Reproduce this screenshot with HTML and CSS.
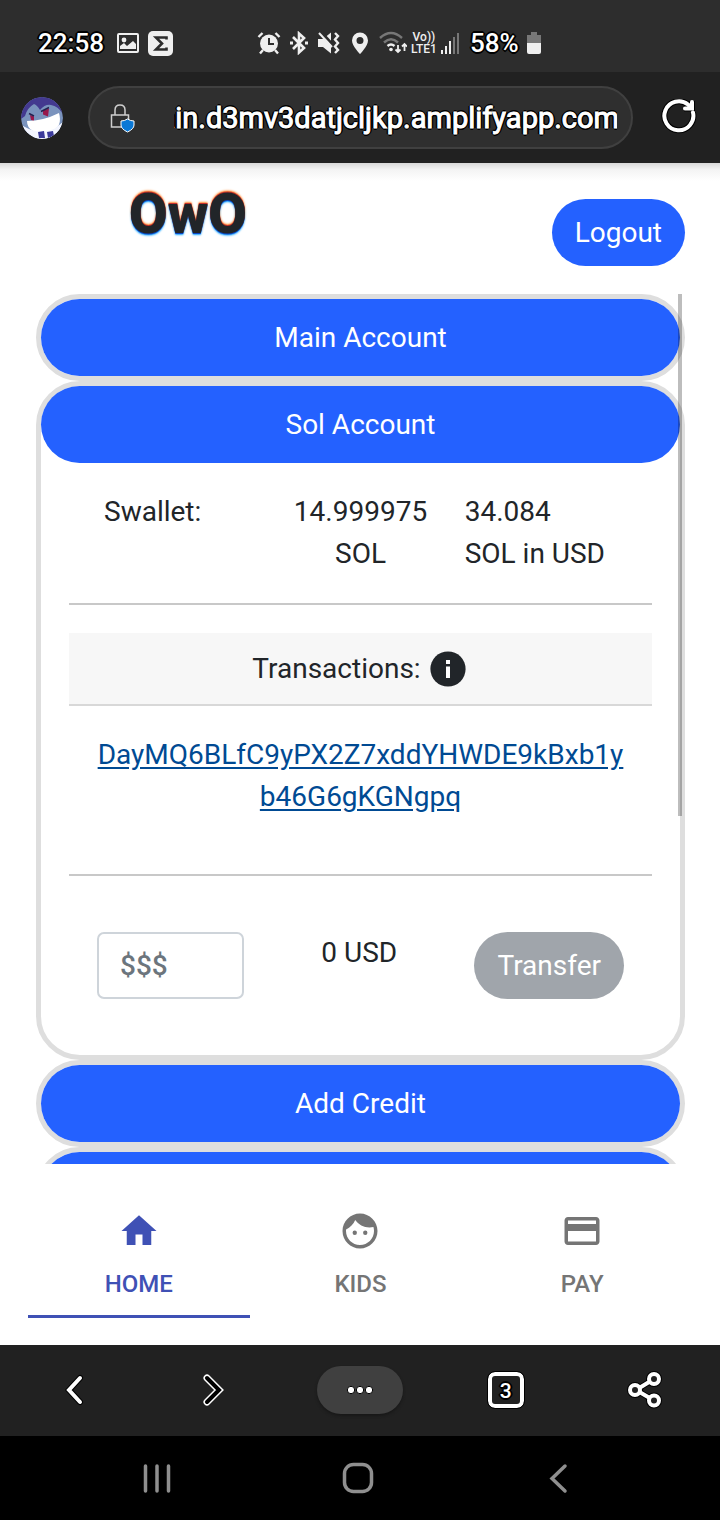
FILE: index.html
```html
<!DOCTYPE html>
<html lang="en">
<head>
<meta charset="utf-8">
<meta name="viewport" content="width=device-width, initial-scale=1">
<title>OwO Wallet</title>
<link rel="stylesheet" href="styles.css">
</head>
<body>
<div class="phone">
  <div class="status">
    <div class="status-left">
      <span class="outlined">22:58</span>
      <svg width="22" height="20" viewBox="0 0 22 20"><rect x="1" y="1" width="20" height="18" rx="1" fill="none" stroke="#efefef" stroke-width="2"/><circle cx="7" cy="7" r="2.4" fill="#efefef"/><path d="M3 16v-3l4-3 3 3 6-5 3 3v5z" fill="#efefef"/></svg>
      <svg width="25" height="25" viewBox="0 0 25 25"><rect width="25" height="25" rx="5" fill="#efefef"/><path d="M18.500 8.500V6.500H8l6 6-6 6h10.500v-2" fill="none" stroke="#2d2d2d" stroke-width="2.600"/></svg>
    </div>
    <div class="status-right">
      <svg width="24" height="24" viewBox="0 0 24 24" fill="none" stroke="#efefef"><circle cx="12" cy="12.500" r="9" fill="#efefef" stroke="none"/><path d="M12 7v6h5" stroke="#2d2d2d" stroke-width="2"/><path d="M1.500 6l4-4M22.500 6l-4-4M6 19l-3 3.500M18 19l3 3.500" stroke-width="2.400"/></svg>
      <svg width="20" height="24" viewBox="0 0 20 24" fill="none" stroke="#efefef" stroke-width="2.600"><path d="M4 6l11 11-5 4.500V2.500L15 7 4 18"/><path d="M1 12h3M16 12h3" stroke-width="3"/></svg>
      <svg width="24" height="24" viewBox="0 0 24 24" fill="#efefef"><path d="M1 8h5l8-6.500v21L6 16H1z"/><path d="M3 0l13 14" stroke="#2d2d2d" stroke-width="3"/><path d="M2 2l13 14" stroke="#efefef" stroke-width="2"/><path d="M18 2l3 3-3 3.500 3 3.500-3 3.500 3 3.500-3 3" fill="none" stroke="#efefef" stroke-width="2.400"/></svg>
      <svg class="pin" width="18" height="24" viewBox="0 0 18 24"><path fill-rule="evenodd" d="M9 1.500a8 8 0 0 0-8 8C1 15 9 23 9 23s8-8 8-13.500a8 8 0 0 0-8-8zM9 6a3.500 3.500 0 1 1 0 7 3.500 3.500 0 0 1 0-7z" fill="#efefef"/></svg>
      <svg width="28" height="24" viewBox="0 0 28 24" fill="none" stroke-width="2.400"><path d="M1 7q11-10 22 0M5 11.500q7-6.500 14 0" stroke="#777"/><path d="M8.500 15q3.500-3 7 0" stroke="#efefef"/><circle cx="12" cy="18.500" r="1.800" fill="#efefef"/><path d="M19 14v7M16.500 18.500L19 21l2.500-2.500M25.500 20v-7M23 15.500l2.500-2.500 2.500 2.500" stroke="#efefef" stroke-width="1.800"/></svg>
      <span class="volte"><span>Vo))</span><span>LTE1</span></span>
      <svg width="18" height="22" viewBox="0 0 18 22"><path d="M0 18h2v4H0zM4 14h2v8H4zM8 9h2v13H8z" fill="#efefef"/><path d="M12 5h2v17h-2zM16 1h2v21h-2z" fill="#777"/></svg>
      <span class="outlined battery-text">58%</span>
      <svg width="14" height="22" viewBox="0 0 14 22"><path d="M4 0h6v3h4v8H0V3h4z" fill="#777"/><path d="M0 11h14v9q0 2-2 2H2q-2 0-2-2z" fill="#efefef"/></svg>
    </div>
  </div>

  <div class="address-bar">
    <svg class="avatar" width="42" height="42" viewBox="0 0 42 42"><defs><clipPath id="face"><circle cx="21" cy="21" r="21"/></clipPath></defs><g clip-path="url(#face)"><path fill="#7a93bd" d="M0 0h42v42H0z"/><path d="M0 0h42v17q-5-8-12-9-6-1-11 5-3-5-6-6-7 4-9 12L0 22z" fill="#43398f"/><path d="M9 18l4 1.500v4.500l-3-1zM22 13.500l6-2-1 8-5-2z" fill="#97184b"/><path d="M8 16.500l5 2.500M20 14.500l8-4" stroke="#242250" stroke-width="1.500"/><path d="M6 24q16 0 32-8 4 14-8 18-10 3-18 0-6-3-6-10z" fill="#fff"/><path d="M0 28l8 4q12 5 25 0l9-7v4l-8 13H6z" fill="#f4f6ff"/><path d="M17 35l6-1 1 7h-6zM26 35l6-1 1 5-6 2z" fill="#3b3a9b"/></g></svg>
    <button class="address" type="button" aria-label="Address">
      <svg class="lock" width="28" height="32" viewBox="0 0 28 32"><path d="M6 13V8q0-5 5-5t5 5v5M2.500 13h17v12h-17z" fill="none" stroke="#cfcfcf" stroke-width="1.500"/><path d="M18.500 17q3 2 6.500 2v4q0 4-6.500 7-6.500-3-6.500-7v-4q3.500 0 6.500-2z" fill="#0a78d6" stroke="#fff"/></svg>
      <span class="url outlined"><span>main.d3mv3datjcljkp.amplifyapp.com</span></span>
    </button>
    <button class="icon-button" type="button" aria-label="Reload"><svg width="38" height="38" viewBox="0 2 38 38" fill="none"><g stroke="#000" stroke-width="6"><path d="M33 15.500A14.500 14.500 0 1 1 28 7.500"/><path d="M32 4v7.500h-8"/></g><g stroke="#fff" stroke-width="4" stroke-linecap="round"><path d="M33 15.500A14.500 14.500 0 1 1 28 7.500l3 3"/><path d="M32 5v6.500h-7"/></g></svg></button>
  </div>

  <div class="page">
    <header class="header">
      <h1 class="logo">OwO</h1>
      <button class="pill" type="button">Logout</button>
    </header>

    <main class="accounts">
      <div class="scroller">
        <section class="account"><button class="account-title" type="button">Main Account</button></section>
        <section class="account">
          <button class="account-title" type="button">Sol Account</button>
          <div class="account-body">
            <div class="balance">
              <span class="balance-label">Swallet:</span>
              <span class="balance-amount">14.999975<br>SOL</span>
              <span class="balance-value">34.084<br>SOL in USD</span>
            </div>
            <div class="transactions-title">Transactions:
              <svg width="36" height="36" viewBox="0 0 36 36"><circle cx="18" cy="18" r="17.600" fill="#212529"/><path d="M16 9h4v4h-4zM16 15.500h4V27h-4z" fill="#fff"/></svg>
            </div>
            <div class="transactions"><a href="#tx">DayMQ6BLfC9yPX2Z7xddYHWDE9kBxb1yb46G6gKGNgpq</a></div>
            <form class="transfer">
              <input class="amount" type="text" placeholder="$$$" aria-label="Amount">
              <span class="usd">0 USD</span>
              <button class="pill" type="button" disabled>Transfer</button>
            </form>
          </div>
        </section>
        <section class="account"><button class="account-title" type="button">Add Credit</button></section>
        <section class="account"><button class="account-title" type="button" aria-label="More"></button></section>
      </div>
      <div class="scrollbar"></div>
    </main>

    <nav class="tabs">
      <a class="tab active" href="#home"><svg width="42" height="42" viewBox="0 0 24 24" fill="currentColor"><path d="M10 20v-6h4v6h5v-8h3L12 3 2 12h3v8z"/></svg>HOME</a>
      <a class="tab" href="#kids"><svg width="42" height="42" viewBox="0 0 24 24" fill="currentColor"><path d="M9 11.750a1.250 1.250 0 1 0 0 2.500 1.250 1.250 0 0 0 0-2.500zm6 0a1.250 1.250 0 1 0 0 2.500 1.250 1.250 0 0 0 0-2.500zM12 2C6.480 2 2 6.480 2 12s4.480 10 10 10 10-4.480 10-10S17.520 2 12 2zm0 18c-4.410 0-8-3.590-8-8 0-.290.020-.580.050-.860 2.360-1.050 4.230-2.980 5.210-5.370C11.070 8.330 14.050 10 17.420 10c.780 0 1.530-.090 2.250-.260.210.710.330 1.470.330 2.260 0 4.410-3.590 8-8 8z"/></svg>KIDS</a>
      <a class="tab" href="#pay"><svg width="42" height="42" viewBox="0 0 24 24" fill="currentColor"><path d="M20 4H4c-1.110 0-1.990.890-1.990 2L2 18c0 1.110.890 2 2 2h16c1.110 0 2-.890 2-2V6c0-1.110-.890-2-2-2zm0 14H4v-6h16v6zm0-10H4V6h16v2z"/></svg>PAY</a>
    </nav>
  </div>

  <div class="toolbar">
    <button class="icon-button edge" type="button" aria-label="Back"><svg width="36" height="36" viewBox="0 0 36 36" fill="none" stroke-linecap="round"><path d="M24 6L13 18l11 12" stroke="#000" stroke-width="6"/><path d="M24 6L13 18l11 12" stroke="#fff" stroke-width="4"/></svg></button>
    <button class="icon-button" type="button" aria-label="Forward"><svg width="36" height="36" viewBox="0 0 36 36" fill="none" stroke-linecap="round"><path d="M12 6l12 12-12 12" stroke="#fff" stroke-width="7"/><path d="M12 6l12 12-12 12" stroke="#000" stroke-width="4"/></svg></button>
    <button class="icon-button more" type="button" aria-label="Menu"><svg width="36" height="36" viewBox="0 0 36 36" fill="#fff" stroke="#000"><circle cx="9" cy="18" r="3.700"/><circle cx="18" cy="18" r="3.700"/><circle cx="27" cy="18" r="3.700"/></svg></button>
    <button class="icon-button" type="button" aria-label="Tabs"><span class="tab-count outlined">3</span></button>
    <button class="icon-button edge" type="button" aria-label="Share"><svg width="36" height="38" viewBox="0 0 36 38" fill="none"><g stroke="#000" stroke-width="6"><path d="M9 19l18-11M9 19l18 10.500"/><circle cx="8" cy="19" r="5"/><circle cx="27" cy="8" r="5"/><circle cx="27" cy="29.500" r="5"/></g><path d="M9 19l18-11M9 19l18 10.500" stroke="#fff" stroke-width="4"/><g fill="#212121" stroke="#fff" stroke-width="4"><circle cx="8" cy="19" r="5"/><circle cx="27" cy="8" r="5"/><circle cx="27" cy="29.500" r="5"/></g></svg></button>
  </div>

  <div class="system-nav">
    <button class="icon-button" type="button" aria-label="Recent apps"><svg width="32" height="32" viewBox="0 0 32 32" stroke="#8f8f8f" stroke-width="3.500" stroke-linecap="round"><path d="M4.500 4v25M16 4v25M27.500 4v25"/></svg></button>
    <button class="icon-button" type="button" aria-label="Home screen"><svg width="32" height="32" viewBox="0 0 32 32" fill="none" stroke="#8f8f8f" stroke-width="3.500"><rect x="2.500" y="2.500" width="27" height="27" rx="9"/></svg></button>
    <button class="icon-button" type="button" aria-label="System back"><svg width="32" height="32" viewBox="0 0 32 32" fill="none" stroke="#8f8f8f" stroke-width="3.500" stroke-linecap="round"><path d="M22 4L9 16.500 22 29"/></svg></button>
  </div>
</div>
</body>
</html>
```

FILE: styles.css
```css
* { box-sizing: border-box; }
body {
  margin: 0;
  font-family: Roboto, "Liberation Sans", sans-serif;
  font-size: 28px;
  line-height: 42px;
  color: #212529;
  background: #fff;
}
svg { display: block; flex: none; }
button, input { font: inherit; }
button { border: 0; padding: 0; background: none; color: inherit; }
.phone { display: flex; flex-direction: column; height: 100vh; }
.outlined {
  color: #fff;
  text-shadow: -1px -1px #000, 1px -1px #000, -1px 1px #000, 1px 1px #000, 0 2px #000, 0 -2px #000, 2px 0 #000, -2px 0 #000;
}

.status {
  display: flex;
  align-items: center;
  gap: 84px;
  height: 72px;
  padding: 14px 38px 0;
  background: #2d2d2d;
  font-size: 26px;
  font-weight: 500;
  line-height: 30px;
}
.status-left, .status-right { display: flex; align-items: center; }
.status-left { gap: 9px; }
.status-left > span { margin-right: 4px; }
.status-right { gap: 8px; }
.pin { margin: 0 2px; }
.volte {
  display: flex;
  flex-direction: column;
  align-items: center;
  margin: 0 -4px;
  color: #efefef;
  font-size: 12px;
  line-height: 12px;
}
.battery-text { margin-left: 3px; }

.address-bar {
  display: flex;
  align-items: center;
  height: 91px;
  padding: 0 20px 0 21px;
  gap: 25px;
  background: #212121;
}
.avatar { border-radius: 50%; }
.address {
  flex: 1;
  min-width: 0;
  display: flex;
  align-items: center;
  gap: 37px;
  height: 63px;
  padding: 0 14px 0 19px;
  border: 2px solid #404040;
  border-radius: 32px;
  background: #2f2f2f;
}
.url {
  flex: 1;
  min-width: 0;
  display: flex;
  justify-content: flex-end;
  overflow: hidden;
  font-size: 29px;
  white-space: nowrap;
}
.url span { margin-right: -2px; -webkit-text-stroke: 1px #fff; }
.address-bar > .icon-button { width: 42px; }
.icon-button { display: flex; align-items: center; justify-content: center; }

.page {
  flex: 1;
  min-height: 0;
  display: flex;
  flex-direction: column;
  background: linear-gradient(#d8d8d8, #f4f4f4 7px, #fff 18px);
}
.header {
  display: flex;
  align-items: flex-start;
  justify-content: space-between;
  padding: 20px 35px 28px 129px;
}
.logo {
  margin: 0;
  font-size: 56px;
  font-weight: 900;
  line-height: 62px;
  text-shadow: 0 -1px #c8302a, 0 1px #0a48c8, 0 -2px 2px #ff8a30, 0 2px 2px #10a0ff;
}
.pill {
  height: 67px;
  padding: 0 23px;
  border-radius: 34px;
  background: #2461ff;
  color: #fff;
}
.header .pill { margin-top: 16px; }
.pill:disabled { background: #a0a5ab; }

.accounts {
  position: relative;
  flex: 1;
  min-height: 0;
  padding: 0 35px 0 36px;
}
.scroller { height: 100%; overflow: hidden; }
.account {
  border: 5px solid #dedede;
  border-radius: 44px;
}
.account-title {
  display: block;
  width: 100%;
  height: 77px;
  border-radius: 39px;
  background: #2461ff;
  color: #fff;
}
.scrollbar {
  position: absolute;
  top: 0;
  right: 38px;
  width: 4px;
  height: 60%;
  background: rgba(0, 0, 0, .26);
}
.account-body { padding: 28px; }
.balance {
  display: grid;
  grid-template-columns: repeat(3, 1fr);
  padding-bottom: 28px;
  border-bottom: 2px solid #c8c8c8;
}
.balance-label { padding-left: 35px; }
.balance-amount { text-align: center; }
.balance-value { padding-left: 7px; }
.transactions-title {
  display: flex;
  align-items: center;
  justify-content: center;
  gap: 9px;
  height: 73px;
  margin-top: 28px;
  padding-right: 3px;
  border-bottom: 2px solid #d8d8d8;
  background: #f7f7f7;
}
.transactions {
  padding: 28px 28px 56px;
  border-bottom: 2px solid #c8c8c8;
  text-align: center;
  word-break: break-all;
}
.transactions a { color: #004a93; text-underline-offset: 3px; }
.transfer {
  display: flex;
  justify-content: space-between;
  padding: 56px 28px 28px;
}
.amount {
  width: 147px;
  height: 67px;
  padding: 0 21px;
  border: 2px solid #ced4da;
  border-radius: 7px;
  background: #fff;
}
.amount::placeholder { color: #6c757d; opacity: 1; font-weight: 500; }

.tabs {
  display: grid;
  grid-template-columns: repeat(3, 1fr);
  padding: 28px 27px 27px 28px;
}
.tab {
  display: flex;
  flex-direction: column;
  align-items: center;
  gap: 11px;
  padding: 18px 0 10px;
  border-bottom: 3px solid transparent;
  color: #757575;
  font-size: 24px;
  font-weight: 500;
  text-decoration: none;
}
.tab.active { color: #3f51b5; border-color: #3f51b5; }

.toolbar {
  display: flex;
  align-items: center;
  justify-content: space-between;
  height: 91px;
  padding: 0 39px 2px 38px;
  background: #212121;
}
.toolbar .icon-button { width: 86px; height: 48px; }
.toolbar .edge { width: 72px; }
.more { border-radius: 24px; background: #404040; box-shadow: 0 2px 3px #181818; }
.tab-count {
  width: 36px;
  height: 36px;
  border: 4px solid #fff;
  border-radius: 7px;
  outline: 1px solid #000;
  font-size: 21px;
  font-weight: 500;
  line-height: 31px;
}

.system-nav {
  display: flex;
  align-items: center;
  justify-content: space-around;
  height: 84px;
  padding: 0 60px 0 56px;
  background: #000;
}
```
